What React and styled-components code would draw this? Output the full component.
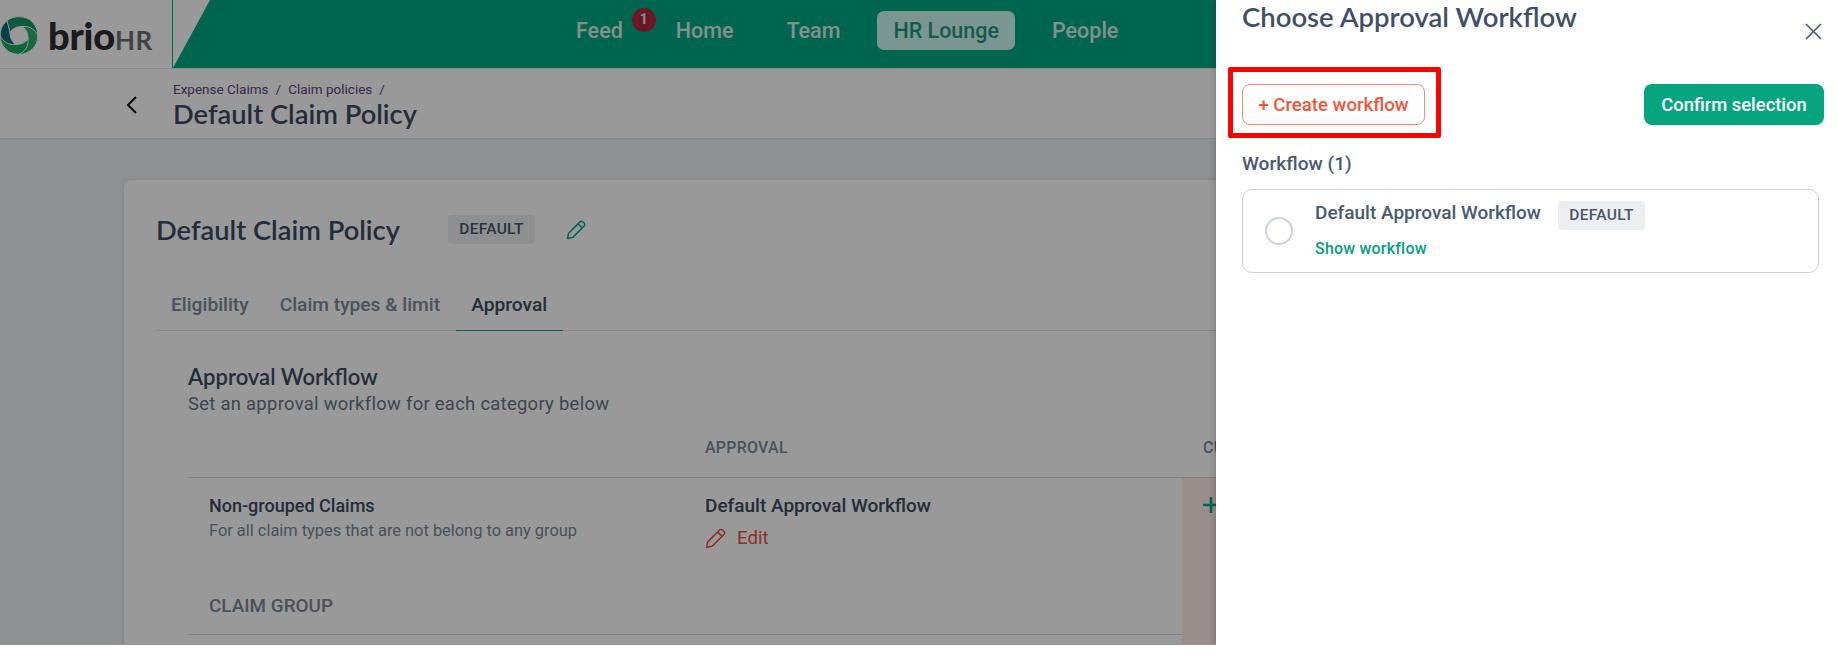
import React from 'react';
import styled, { createGlobalStyle } from 'styled-components';

const navItems = ['Home', 'Team', 'HR Lounge', 'People'];
const tabs = ['Eligibility', 'Claim types & limit', 'Approval'];
const swirlBlades = [
    { angle: 270, fill: '#0b6f74' },
    { angle: 180, fill: '#1ea860' },
    { angle: 90, fill: '#2ab36a' },
    { angle: 0, fill: '#14976a' }
];

const GlobalStyle = createGlobalStyle`
    html, body {
        margin: 0;
        padding: 0;
        background: #fff;
    }
    * {
        box-sizing: border-box;
    }
    body {
        font-family: Roboto, "Liberation Sans", sans-serif;
        color: #3b4c63;
    }
`;

const Screen = styled.div`
    position: relative;
    width: 1838px;
    height: 645px;
    overflow: hidden;
    background: #eff0f3;
`;

const Overlay = styled.div`
    position: absolute;
    inset: 0;
    background: rgba(0, 0, 0, 0.4);
`;

const Header = styled.header`
    display: flex;
    height: 69px;
    background: #fff;
    border-bottom: 1px solid #e2e4e8;
`;

const LogoCell = styled.div`
    display: flex;
    align-items: center;
    flex: 0 0 173px;
    gap: 9px;
    padding-top: 2px;
    border-right: 1px solid #00a884;
`;

const SwirlIcon = styled.svg`
    flex: none;
    width: 40px;
    height: 41px;
    margin-left: -1px;
`;

const Wordmark = styled.div`
    display: flex;
    align-items: baseline;
    font-family: Lato, sans-serif;
    font-weight: 900;
    font-size: 38px;
    line-height: 1;
    color: #2a2e31;
    letter-spacing: -0.2px;
`;

const WordmarkHr = styled.span`
    font-size: 26px;
    font-weight: 700;
    color: #6c7072;
    letter-spacing: 0.4px;
`;

const GreenBar = styled.div`
    flex: 1;
    display: flex;
    align-items: center;
    gap: 21px;
    padding-left: 387px;
    background: #00a884;
    clip-path: polygon(37px 0, 100% 0, 100% 100%, 0 100%);
`;

const NavItem = styled.div`
    position: relative;
    height: 39px;
    padding: 0 16px;
    margin-top: -7px;
    display: flex;
    align-items: center;
    font-size: 21.5px;
    font-weight: 500;
    border-radius: 7px;
    color: ${({ $active }) => ($active ? '#1f9a80' : '#ffffff')};
    background: ${({ $active }) => ($active ? '#cdfbf0' : 'transparent')};
    opacity: ${({ $active }) => ($active ? 1 : 0.85)};
`;

const Badge = styled.span`
    position: absolute;
    top: -3px;
    right: -17px;
    width: 24px;
    height: 24px;
    border-radius: 50%;
    background: #d3112f;
    color: #fff;
    font-size: 14px;
    font-weight: 700;
    display: flex;
    align-items: center;
    justify-content: center;
    padding-bottom: 3px;
`;

const SubHeader = styled.div`
    display: flex;
    align-items: center;
    height: 70px;
    padding: 3px 0 0 126px;
    background: #fff;
    border-bottom: 1px solid #dfe1e5;
`;

const BackIcon = styled.svg`
    width: 11px;
    height: 18px;
    margin-right: 36px;
    flex: none;
`;

const Crumbs = styled.div`
    display: flex;
    gap: 7px;
    font-size: 13.5px;
    line-height: 16px;
    color: #5c4585;
`;

const PageTitle = styled.h1`
    margin: 1px 0 0;
    font-family: Lato, sans-serif;
    font-size: 27.3px;
    line-height: 31px;
    font-weight: 600;
    color: #3b4c63;
`;

const Main = styled.main`
    padding: 41px 0 0 124px;
`;

const Card = styled.section`
    width: 1400px;
    min-height: 700px;
    padding: 30px 32px 0;
    background: #fff;
    border-radius: 8px;
    box-shadow: 0 0 4px rgba(0, 0, 0, 0.12);
`;

const TitleRow = styled.div`
    display: flex;
    align-items: center;
    height: 38px;
`;

const CardTitle = styled.h2`
    margin: 0 48px 0 0;
    font-family: Lato, sans-serif;
    font-size: 27.3px;
    font-weight: 600;
    color: #3b4c63;
`;

const Tag = styled.span`
    display: inline-flex;
    align-items: center;
    justify-content: center;
    width: 87px;
    height: 29px;
    border-radius: 4px;
    background: #edeef2;
    font-size: 15.5px;
    font-weight: 500;
    letter-spacing: 0.3px;
    color: #4a5567;
`;

const PencilIcon = styled.svg`
    flex: none;
    width: ${({ $size }) => $size}px;
    height: ${({ $size }) => $size}px;
    color: ${({ $color }) => $color};
`;

const TitlePencil = styled.span`
    display: flex;
    margin-left: 31px;
`;

const TabBar = styled.div`
    display: flex;
    height: 50px;
    margin-top: 33px;
    border-bottom: 1px solid #dcdfe3;
`;

const Tab = styled.div`
    display: flex;
    align-items: center;
    height: 50px;
    padding: 0 16px 2px 15px;
    font-size: 19.2px;
    font-weight: 500;
    color: ${({ $active }) => ($active ? '#3b4c63' : '#7d8797')};
    border-bottom: 1px solid ${({ $active }) => ($active ? '#00a884' : 'transparent')};
`;

const Section = styled.div`
    padding: 32px 0 0 32px;
`;

const SectionTitle = styled.h3`
    margin: 0;
    font-family: Lato, sans-serif;
    font-size: 22px;
    line-height: 28px;
    font-weight: 600;
    color: #3b4c63;
`;

const SectionSub = styled.p`
    margin: 2px 0 0;
    font-size: 18.4px;
    line-height: 22px;
    color: #6b7584;
    letter-spacing: 0.3px;
`;

const TableHead = styled.div`
    display: grid;
    grid-template-columns: 517px 477px 1fr;
    align-items: center;
    height: 63px;
    padding-top: 2px;
    border-bottom: 1px solid #d5d8dc;
    font-size: 15.9px;
    font-weight: 500;
    letter-spacing: 0.3px;
    color: #7d8797;
`;

const HeadCell = styled.div`
    padding-left: ${({ $pad }) => $pad || 0}px;
`;

const TableBody = styled.div`
    display: grid;
    grid-template-columns: 517px 477px 1fr;
    grid-template-rows: 101px 56px 30px;
`;

const NameCell = styled.div`
    padding: 17px 0 0 21px;
`;

const RowTitle = styled.div`
    font-size: 18px;
    line-height: 22px;
    font-weight: 500;
    color: #3b4c63;
`;

const WorkflowTitle = styled(RowTitle)`
    font-size: 19px;
`;

const RowSub = styled.div`
    margin-top: 5px;
    font-size: 16.4px;
    line-height: 18px;
    color: #7d8797;
`;

const WorkflowCell = styled.div`
    padding-top: 17px;
`;

const EditLink = styled.div`
    display: flex;
    align-items: center;
    gap: 10px;
    margin-top: 9px;
    font-size: 18.6px;
    line-height: 24px;
    color: #e8533a;
`;

const CustomCell = styled.div`
    grid-column: 3;
    grid-row: 1 / span 3;
    padding: 17px 0 0 19px;
    background: #ffebe1;
    color: #00a884;
`;

const GroupLabel = styled.div`
    grid-column: 1 / span 2;
    display: flex;
    align-items: center;
    padding: 0 0 2px 21px;
    font-size: 18.9px;
    font-weight: 500;
    color: #7d8797;
    border-bottom: 1px solid #d5d8dc;
`;

const Drawer = styled.aside`
    position: absolute;
    top: 0;
    right: 0;
    bottom: 0;
    width: 622px;
    padding: 0 14px 0 26px;
    background: #fff;
    box-shadow: -2px 0 5px rgba(0, 0, 0, 0.15);
`;

const DrawerTitle = styled.h2`
    margin: 0;
    font-family: Lato, sans-serif;
    font-size: 27.5px;
    line-height: 34px;
    font-weight: 600;
    color: #3f5066;
`;

const CloseIcon = styled.svg`
    position: absolute;
    top: 23px;
    right: 16px;
    width: 17px;
    height: 17px;
    color: #4a5a6e;
`;

const Toolbar = styled.div`
    display: flex;
    align-items: center;
    justify-content: space-between;
    margin-top: 50px;
`;

const OutlineButton = styled.div`
    position: relative;
    display: flex;
    align-items: center;
    justify-content: center;
    width: 183px;
    height: 41px;
    border: 1px solid #f58a72;
    border-radius: 8px;
    font-size: 18.6px;
    font-weight: 500;
    color: #f2563a;

    /* red annotation box from the screenshot */
    &::after {
        content: '';
        position: absolute;
        top: -18px;
        left: -15px;
        right: -17px;
        bottom: -14px;
        border: 5px solid #ff0000;
        border-radius: 2px;
    }
`;

const PrimaryButton = styled.div`
    display: flex;
    align-items: center;
    justify-content: center;
    width: 180px;
    height: 41px;
    border-radius: 8px;
    background: #05a57f;
    font-size: 18.4px;
    font-weight: 500;
    color: #fff;
`;

const ListLabel = styled.div`
    margin-top: 28px;
    font-size: 19.2px;
    line-height: 22px;
    font-weight: 500;
    color: #4a5a6e;
`;

const WorkflowCard = styled.div`
    display: flex;
    align-items: center;
    width: 577px;
    height: 84px;
    margin-top: 14px;
    padding-left: 22px;
    border: 1px solid #cdd3da;
    border-radius: 10px;
`;

const Radio = styled.span`
    flex: none;
    width: 28px;
    height: 28px;
    margin-right: 22px;
    border: 2px solid #cfd4da;
    border-radius: 50%;
`;

const WorkflowInfo = styled.div`
    display: flex;
    flex-direction: column;
`;

const WorkflowNameRow = styled.div`
    display: flex;
    align-items: center;
    gap: 17px;
    margin-top: -3px;
`;

const WorkflowName = styled.span`
    padding-bottom: 6px;
    font-size: 19px;
    font-weight: 500;
    color: #4a5a6e;
`;

const ShowLink = styled.span`
    margin-top: 9px;
    font-size: 16px;
    line-height: 20px;
    font-weight: 500;
    letter-spacing: 0.2px;
    color: #05a07b;
`;

const Pencil = ({ size, color }) => (
    <PencilIcon $size={size} $color={color} viewBox="0 0 20 20" fill="none" stroke="currentColor" strokeWidth="1.4">
        <path d="M1.5 18.5l1-5L12.8 3.2a2.4 2.4 0 0 1 3.9 0.1 2.4 2.4 0 0 1 0.1 3.9L6.5 17.5z" strokeLinejoin="round"/>
        <path d="M11.5 4.5l4 4"/>
    </PencilIcon>
);

// four overlapping blades of the brio swirl, white edge keeps them apart
const Swirl = () => (
    <SwirlIcon viewBox="0 0 40 40">
        {swirlBlades.map(({ angle, fill }) => (
            <path
                key={angle}
                transform={`rotate(${angle} 20 20)`}
                fill={fill}
                stroke="#fff"
                strokeWidth="1"
                d="M8 5C14 0 27 -1 34 7 37 11 39 15 39 20 36 14 31 11 26 11 20 10.5 14 12 11 17 10 13 9 9 8 5z"
            />
        ))}
    </SwirlIcon>
);

const App = () => {
    return (
        <Screen>
            <GlobalStyle/>
            <Header>
                <LogoCell>
                    <Swirl/>
                    <Wordmark>brio<WordmarkHr>HR</WordmarkHr></Wordmark>
                </LogoCell>
                <GreenBar>
                    <NavItem>Feed<Badge>1</Badge></NavItem>
                    {navItems.map(item => (
                        <NavItem key={item} $active={item === 'HR Lounge'}>{item}</NavItem>
                    ))}
                </GreenBar>
            </Header>
            <SubHeader>
                <BackIcon viewBox="0 0 11 18" fill="none" stroke="#111" strokeWidth="2">
                    <path d="M10 1L2 9l8 8"/>
                </BackIcon>
                <div>
                    <Crumbs>
                        <span>Expense Claims</span><span>/</span><span>Claim policies</span><span>/</span>
                    </Crumbs>
                    <PageTitle>Default Claim Policy</PageTitle>
                </div>
            </SubHeader>
            <Main>
                <Card>
                    <TitleRow>
                        <CardTitle>Default Claim Policy</CardTitle>
                        <Tag>DEFAULT</Tag>
                        <TitlePencil><Pencil size={21} color="#00a884"/></TitlePencil>
                    </TitleRow>
                    <TabBar>
                        {tabs.map(tab => (
                            <Tab key={tab} $active={tab === 'Approval'}>{tab}</Tab>
                        ))}
                    </TabBar>
                    <Section>
                        <SectionTitle>Approval Workflow</SectionTitle>
                        <SectionSub>Set an approval workflow for each category below</SectionSub>
                        <TableHead>
                            <HeadCell/>
                            <HeadCell>APPROVAL</HeadCell>
                            <HeadCell $pad={21}>CUSTOM</HeadCell>
                        </TableHead>
                        <TableBody>
                            <NameCell>
                                <RowTitle>Non-grouped Claims</RowTitle>
                                <RowSub>For all claim types that are not belong to any group</RowSub>
                            </NameCell>
                            <WorkflowCell>
                                <WorkflowTitle>Default Approval Workflow</WorkflowTitle>
                                <EditLink><Pencil size={22} color="#e8533a"/>Edit</EditLink>
                            </WorkflowCell>
                            <CustomCell>
                                <svg width="20" height="20" viewBox="0 0 20 20" stroke="currentColor" strokeWidth="2.5">
                                    <path d="M10 2v16M2 10h16"/>
                                </svg>
                            </CustomCell>
                            <GroupLabel>CLAIM GROUP</GroupLabel>
                        </TableBody>
                    </Section>
                </Card>
            </Main>
            <Overlay/>
            <Drawer>
                <DrawerTitle>Choose Approval Workflow</DrawerTitle>
                <CloseIcon viewBox="0 0 17 17" fill="none" stroke="currentColor" strokeWidth="1.6">
                    <path d="M1 1l15 15M16 1L1 16"/>
                </CloseIcon>
                <Toolbar>
                    <OutlineButton>+ Create workflow</OutlineButton>
                    <PrimaryButton>Confirm selection</PrimaryButton>
                </Toolbar>
                <ListLabel>Workflow (1)</ListLabel>
                <WorkflowCard>
                    <Radio/>
                    <WorkflowInfo>
                        <WorkflowNameRow>
                            <WorkflowName>Default Approval Workflow</WorkflowName>
                            <Tag>DEFAULT</Tag>
                        </WorkflowNameRow>
                        <ShowLink>Show workflow</ShowLink>
                    </WorkflowInfo>
                </WorkflowCard>
            </Drawer>
        </Screen>
    );
};

export default App;
